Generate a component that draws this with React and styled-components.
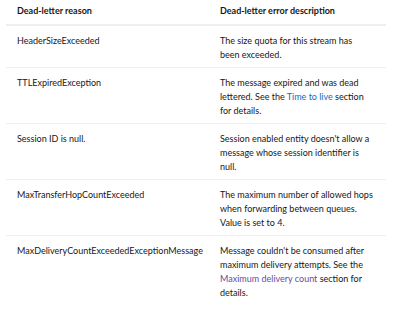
import React from 'react';
import styled, {createGlobalStyle} from 'styled-components';

const GlobalStyle = createGlobalStyle`
  body {
    margin: 0;
    background: #ffffff;
    font-family: "Segoe UI", Lato, "Noto Sans", sans-serif;
    color: #171717;
  }
`

const Page = styled.div`
  padding: 0 14px 0 6px;
  width: 400px;
  height: 315px;
  box-sizing: border-box;
  overflow: hidden;
`

const Table = styled.div`
  display: grid;
  grid-template-columns: 203px 177px;
  font-size: 9px;
  line-height: 14px;
`

const HeadCell = styled.div`
  padding: 4px 13px 6px 11px;
  font-weight: 700;
  border-bottom: 2px solid #efefef;
`

const Cell = styled.div`
  padding: 8px 13px 5px 11px;
  border-bottom: 1px solid #efefef;
  &:nth-last-child(-n+2) {
    border-bottom: none;
  }
`

const DocLink = styled.a`
  color: ${(p) => (p.$visited ? '#6a4c9c' : '#0f6cbd')};
  text-decoration: none;
`

const rows = [
    {
        reason: 'HeaderSizeExceeded',
        desc: <>The size quota for this stream has been exceeded.</>,
    },
    {
        reason: 'TTLExpiredException',
        desc: <>The message expired and was dead lettered. See the <DocLink href="#">Time to live</DocLink> section for details.</>,
    },
    {
        reason: 'Session ID is null.',
        desc: <>Session enabled entity doesn't allow a message whose session identifier is null.</>,
    },
    {
        reason: 'MaxTransferHopCountExceeded',
        desc: <>The maximum number of allowed hops when forwarding between queues. Value is set to 4.</>,
    },
    {
        reason: 'MaxDeliveryCountExceededExceptionMessage',
        desc: <>Message couldn't be consumed after maximum delivery attempts. See the <DocLink href="#" $visited>Maximum delivery count</DocLink> section for details.</>,
    },
]

const App = () => {
    return (
        <Page>
            <GlobalStyle/>
            <Table>
                <HeadCell>Dead-letter reason</HeadCell>
                <HeadCell>Dead-letter error description</HeadCell>
                {rows.map((row) => (
                    <React.Fragment key={row.reason}>
                        <Cell>{row.reason}</Cell>
                        <Cell>{row.desc}</Cell>
                    </React.Fragment>
                ))}
            </Table>
        </Page>
    );
};

export default App;
